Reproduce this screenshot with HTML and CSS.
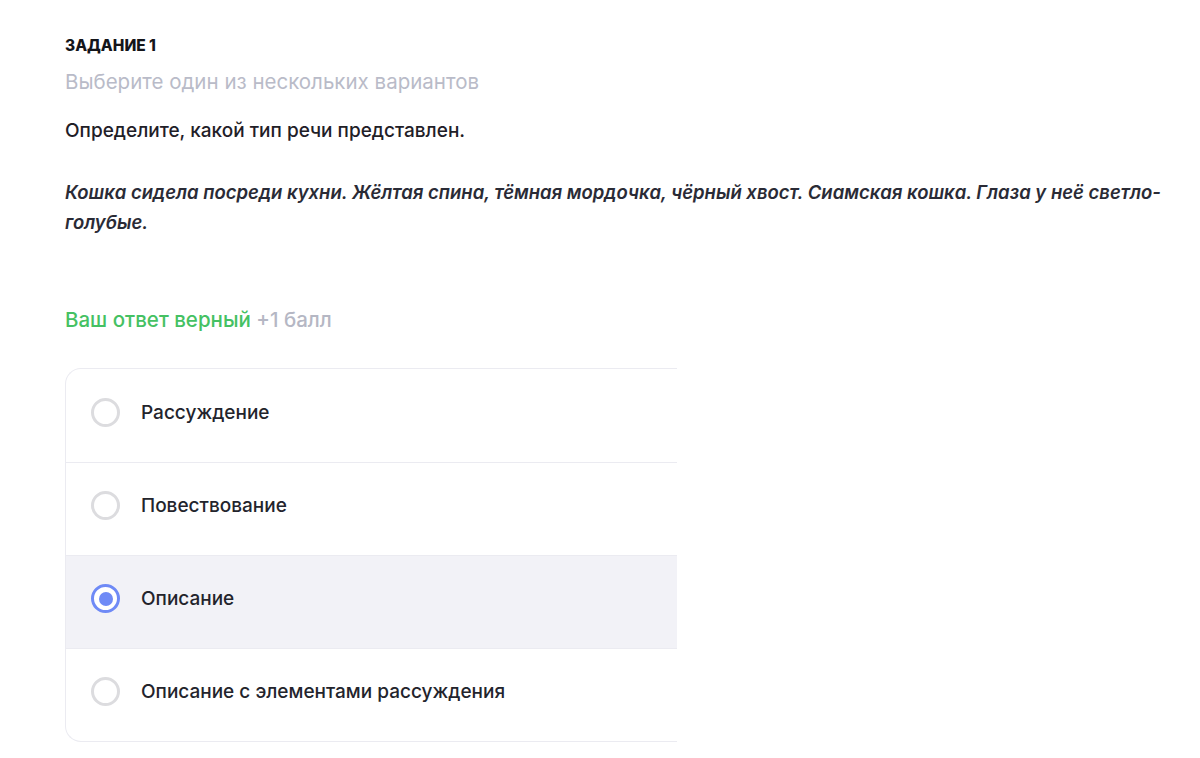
FILE: index.html
```html
<!DOCTYPE html>
<html lang="ru">
<head>
<meta charset="utf-8">
<link rel="stylesheet" href="styles.css">
</head>
<body>
<main class="task">
  <div class="task-label">ЗАДАНИЕ 1</div>
  <div class="task-hint">Выберите один из нескольких вариантов</div>
  <p class="task-question">Определите, какой тип речи представлен.</p>
  <p class="task-text">Кошка сидела посреди кухни. Жёлтая спина, тёмная мордочка, чёрный хвост. Сиамская кошка. Глаза у неё светло-голубые.</p>
  <div class="result"><span class="result-ok">Ваш ответ верный</span> <span class="result-score">+1 балл</span></div>
  <div class="options">
    <div class="option"><span class="radio"></span><span class="option-text">Рассуждение</span></div>
    <div class="option"><span class="radio"></span><span class="option-text">Повествование</span></div>
    <div class="option option-selected"><span class="radio radio-on"></span><span class="option-text">Описание</span></div>
    <div class="option"><span class="radio"></span><span class="option-text">Описание с элементами рассуждения</span></div>
  </div>
</main>
</body>
</html>
```
FILE: styles.css
```css
html, body {
  margin: 0;
  padding: 0;
  background: #ffffff;
}
body {
  font-family: Inter, "Noto Sans", sans-serif;
  color: #1f2027;
  overflow: hidden;
}
.task {
  padding: 36px 0 0 65px;
}
.task-label {
  font-size: 15.5px;
  font-weight: 800;
  line-height: 20px;
  color: #14151a;
  letter-spacing: 0;
}
.task-hint {
  margin-top: 12px;
  font-size: 20.5px;
  line-height: 28px;
  color: #b9bbc8;
}
.task-question {
  margin: 22px 0 0;
  font-size: 19px;
  line-height: 26px;
  font-weight: 500;
  color: #1f2027;
}
.task-text {
  margin: 33px 0 0;
  width: 1115px;
  font-size: 18.5px;
  line-height: 30px;
  font-style: italic;
  font-weight: 600;
  color: #2a2b36;
}
.result {
  margin-top: 69px;
  font-size: 20.5px;
  line-height: 28px;
  font-weight: 500;
}
.result-ok {
  color: #45c163;
}
.result-score {
  color: #b5b7c4;
}
.options {
  margin-top: 34px;
  width: 611px;
  border: 1.5px solid #ebebf1;
  border-right: none;
  border-radius: 16px 0 0 16px;
  overflow: hidden;
}
.option {
  height: 93px;
  box-sizing: border-box;
  display: flex;
  align-items: center;
  padding: 0 0 7px 25px;
  gap: 21px;
  border-top: 1.5px solid #ebebf1;
}
.option:first-child {
  border-top: none;
}
.option-selected {
  background: #f2f2f7;
}
.radio {
  width: 29px;
  height: 29px;
  box-sizing: border-box;
  border-radius: 50%;
  border: 3px solid #dcdcdf;
  background: #ffffff;
  flex: none;
  display: flex;
  align-items: center;
  justify-content: center;
}
.radio-on {
  border-color: #6f8af6;
}
.radio-on::after {
  content: "";
  width: 14px;
  height: 14px;
  border-radius: 50%;
  background: #6f8af6;
}
.option-text {
  font-size: 19px;
  font-weight: 500;
  color: #23242c;
}
```
